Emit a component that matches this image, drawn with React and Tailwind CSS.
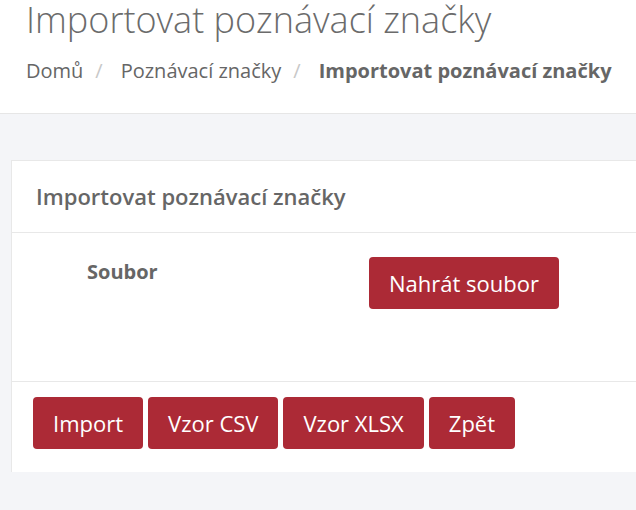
import React from "react";

const Btn = ({ children, className = "" }) => (
  <button
    type="button"
    className={`h-[52px] px-5 rounded-[4px] bg-[#ac2a36] text-white text-[22px] leading-none flex items-center ${className}`}
  >
    {children}
  </button>
);

const App = () => {
  return (
    <div className="min-h-[510px] overflow-hidden bg-[#f4f5f8] font-['Open_Sans',sans-serif] text-[#666]">
      {/* Page header */}
      <header className="h-[114px] bg-white border-b border-[#e6e6e6] px-[26px]">
        <h1 className="text-[36px] leading-[1.1] font-light text-[#6b6b6b] whitespace-nowrap">
          Importovat poznávací značky
        </h1>
        <nav className="mt-4 text-[20px] leading-[30px] flex items-center whitespace-nowrap">
          <span>Domů</span>
          <span className="ml-3 mr-[18px] text-[#c8c8c8]">/</span>
          <span>Poznávací značky</span>
          <span className="ml-3 mr-[18px] text-[#c8c8c8]">/</span>
          <span className="font-bold">Importovat poznávací značky</span>
        </nav>
      </header>

      {/* Card */}
      <div className="pt-[46px] pl-[11px]">
        <div className="mr-[-30px] bg-white border-l border-t border-[#e8e8e8]">
          <div className="h-[72px] border-b border-[#e8e8e8] pl-6 flex items-center text-[22px] font-semibold">
            Importovat poznávací značky
          </div>

          <div className="h-[149px] border-b border-[#e8e8e8] pt-6 flex items-start">
            <label className="ml-[75px] w-[282px] text-[20px] leading-[30px] font-bold">
              Soubor
            </label>
            <Btn>Nahrát soubor</Btn>
          </div>

          <div className="h-[90px] pt-[15px] pl-[21px] flex items-start gap-[5px]">
            <Btn>Import</Btn>
            <Btn>Vzor CSV</Btn>
            <Btn>Vzor XLSX</Btn>
            <Btn>Zpět</Btn>
          </div>
        </div>
      </div>
    </div>
  );
};

export default App;
